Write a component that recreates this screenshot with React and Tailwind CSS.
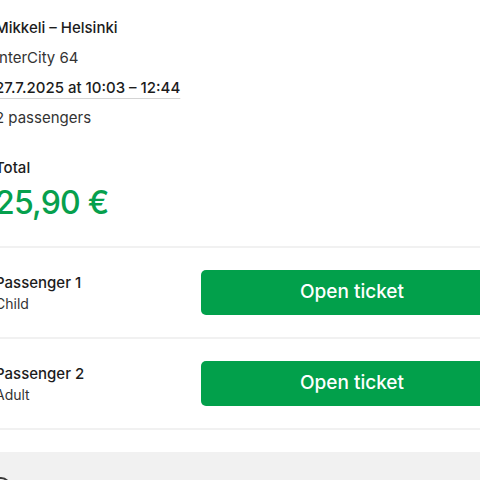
import React from "react";

const passengers = [
  { name: "Passenger 1", type: "Child" },
  { name: "Passenger 2", type: "Adult" },
];

export default function App() {
  return (
    <div
      className="w-[480px] h-[480px] overflow-hidden bg-white text-[#1c1c1c]"
      style={{ fontFamily: "Inter, 'Noto Sans', sans-serif" }}
    >
      {/* Trip summary */}
      <div className="ml-[-5px] pt-[13px] text-[15px] leading-[30px]">
        <div className="font-medium">Mikkeli – Helsinki</div>
        <div className="text-[#333]">InterCity 64</div>
        <div className="font-medium">
          <span className="underline decoration-[#d4d4d4] decoration-1 underline-offset-[5px]">
            27.7.2025 at 10:03 – 12:44
          </span>
        </div>
        <div className="text-[#333]">2 passengers</div>
        <div className="mt-[20px] font-medium">Total</div>
        <div className="text-[32px] leading-[40px] font-medium text-[#06a04d] tracking-tight">
          25,90 €
        </div>
      </div>

      <div className="mt-[23px] border-b-2 border-[#f1f1f1]" />

      {/* Passenger rows */}
      {passengers.map((p) => (
        <div
          key={p.name}
          className="flex items-center border-b-2 border-[#f1f1f1] py-[22px]"
        >
          <div className="ml-[-5px] w-[206px] shrink-0">
            <div className="text-[15px] leading-[22px] font-medium">{p.name}</div>
            <div className="text-[14px] leading-[20px] text-[#333]">{p.type}</div>
          </div>
          <button className="shrink-0 w-[302px] h-[45px] rounded-[5px] bg-[#02a04b] text-white text-[19px] font-medium">
            Open ticket
          </button>
        </div>
      ))}

      {/* Info section, only its top edge is in view */}
      <div className="mt-[22px] bg-[#f1f1f1] h-[60px] pt-[25px]">
        <div className="ml-[-9px] w-[20px] h-[20px] rounded-full border-2 border-[#3a3a3a]" />
      </div>
    </div>
  );
}
